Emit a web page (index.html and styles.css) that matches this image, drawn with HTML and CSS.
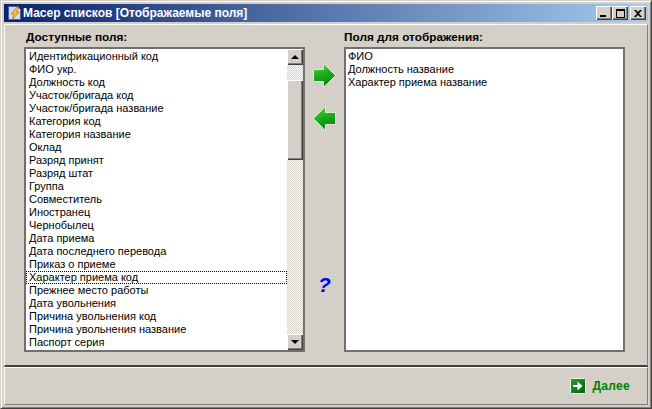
FILE: index.html
```html
<!DOCTYPE html>
<html>

<head>
    <meta charset="UTF-8">
    <title>Масер списков</title>
    <link rel="stylesheet" href="styles.css">
</head>

<body>
    <div class="window">
        <div class="titlebar">
            <svg class="appIcon" width="14" height="16" viewBox="0 0 14 16">
                <path d="M0.500 1.500h9l3 3v10h-12z" fill="#cfdcf5" stroke="#4a5f9a"/>
                <path d="M9 2L3 9h3l-2 6 7-8H8l3-5z" fill="#f7c81e" stroke="#d0601a" stroke-width="0.7"/>
            </svg>
            <div class="titleText">Масер списков [Отображаемые поля]</div>
            <div class="capButtons">
                <div class="capButton"><span class="minGlyph"></span></div>
                <div class="capButton"><span class="maxGlyph"></span></div>
                <div class="capButton closeButton">
                    <svg width="8" height="7" viewBox="0 0 8 7"><path d="M0 0h2l2 2 2-2h2L5 3.500 8 7H6L4 5 2 7H0l3-3.500z" fill="#000"/></svg>
                </div>
            </div>
        </div>

        <div class="mainPanel">
            <div class="column">
                <div class="caption">Доступные поля:</div>
                <div class="listbox">
                    <div class="items">
                        <div class="item">Идентификационный код</div>
                        <div class="item">ФИО укр.</div>
                        <div class="item">Должность код</div>
                        <div class="item">Участок/бригада код</div>
                        <div class="item">Участок/бригада название</div>
                        <div class="item">Категория код</div>
                        <div class="item">Категория название</div>
                        <div class="item">Оклад</div>
                        <div class="item">Разряд принят</div>
                        <div class="item">Разряд штат</div>
                        <div class="item">Группа</div>
                        <div class="item">Совместитель</div>
                        <div class="item">Иностранец</div>
                        <div class="item">Чернобылец</div>
                        <div class="item">Дата приема</div>
                        <div class="item">Дата последнего перевода</div>
                        <div class="item">Приказ о приеме</div>
                        <div class="item focused">Характер приема код</div>
                        <div class="item">Прежнее место работы</div>
                        <div class="item">Дата увольнения</div>
                        <div class="item">Причина увольнения код</div>
                        <div class="item">Причина увольнения название</div>
                        <div class="item">Паспорт серия</div>
                    </div>
                    <div class="scrollbar">
                        <div class="scrollBtn"><span class="arrowUp"></span></div>
                        <div class="track short"></div>
                        <div class="thumb"></div>
                        <div class="track"></div>
                        <div class="scrollBtn"><span class="arrowDown"></span></div>
                    </div>
                </div>
            </div>

            <div class="middle">
                <svg class="moveIcon" width="25" height="25" viewBox="0 0 25 25">
                    <defs>
                        <linearGradient id="arrowFill" x1="0" y1="0" x2="0.300" y2="1">
                            <stop offset="0" stop-color="#66dd3c"/>
                            <stop offset="0.500" stop-color="#1cb01e"/>
                            <stop offset="1" stop-color="#0b8413"/>
                        </linearGradient>
                    </defs>
                    <path d="M1.500 6.500h10v-6l12 12-12 12v-6h-10z" fill="url(#arrowFill)" stroke="#dfe9cf"/>
                </svg>
                <svg class="moveIcon" width="25" height="25" viewBox="0 0 25 25">
                    <path d="M23.500 6.500h-10v-6l-12 12 12 12v-6h10z" fill="url(#arrowFill)" stroke="#dfe9cf"/>
                </svg>
                <div class="help">?</div>
            </div>

            <div class="column">
                <div class="caption captionRight">Поля для отображения:</div>
                <div class="listbox listRight">
                    <div class="items">
                        <div class="item">ФИО</div>
                        <div class="item">Должность название</div>
                        <div class="item">Характер приема название</div>
                    </div>
                </div>
            </div>
        </div>

        <div class="footer">
            <svg width="16" height="16" viewBox="0 0 16 16">
                <defs>
                    <linearGradient id="nextFill" x1="0" y1="0" x2="1" y2="1">
                        <stop offset="0" stop-color="#2a9a36"/>
                        <stop offset="1" stop-color="#06600f"/>
                    </linearGradient>
                </defs>
                <rect x="0.500" y="0.500" width="15" height="15" rx="1" fill="url(#nextFill)" stroke="#eef3ea"/>
                <path d="M3 7h4.500V3.500L12.500 8l-5 4.500V9H3z" fill="#fff"/>
            </svg>
            <div class="nextText">Далее</div>
        </div>
    </div>
</body>

</html>
```

FILE: styles.css
```css
html, body {
    margin: 0;
    padding: 0;
}

body {
    width: 652px;
    height: 409px;
    overflow: hidden;
    font-family: "Liberation Sans", Arial, sans-serif;
    font-size: 11px;
    color: #000;
    background-color: #d4d0c8;
}

.window {
    width: 652px;
    height: 409px;
    box-sizing: border-box;
    padding: 3px;
    border: 1px solid;
    border-color: #d4d0c8 #404040 #404040 #d4d0c8;
    box-shadow: inset 1px 1px 0 #fff, inset -1px -1px 0 #808080;
    display: flex;
    flex-direction: column;
}

.titlebar {
    height: 18px;
    flex: none;
    display: flex;
    align-items: center;
    background: linear-gradient(to right, #0a246a, #a6caf0);
    padding-left: 4px;
    margin-bottom: 2px;
}

.appIcon {
    flex: none;
    margin-right: 1px;
}

.titleText {
    flex: 1;
    color: #fff;
    font-weight: bold;
    font-size: 12px;
    white-space: nowrap;
}

.capButtons {
    display: flex;
    margin-right: 2px;
}

.capButton {
    width: 16px;
    height: 14px;
    box-sizing: border-box;
    background-color: #d4d0c8;
    box-shadow: inset 1px 1px 0 #fff, inset -1px -1px 0 #404040, inset -2px -2px 0 #808080;
    display: flex;
    align-items: center;
    justify-content: center;
}

.closeButton {
    margin-left: 2px;
}

.minGlyph {
    width: 6px;
    height: 2px;
    background-color: #000;
    margin-top: 6px;
    margin-right: 2px;
}

.maxGlyph {
    width: 9px;
    height: 9px;
    box-sizing: border-box;
    border: 1px solid #000;
    border-top-width: 2px;
}

.mainPanel {
    height: 343px;
    flex: none;
    box-sizing: border-box;
    padding: 5px 0 0 19px;
    display: flex;
    border-style: solid;
    border-color: #fff #808080 #404040 #fff;
    border-width: 1px 1px 2px 1px;
}

.column {
    width: 281px;
    flex: none;
}

.caption {
    font-weight: bold;
    font-size: 11.800px;
    height: 17px;
    line-height: 14px;
    padding-left: 2px;
    white-space: nowrap;
}

.captionRight {
    padding-left: 0;
}

.listbox {
    width: 281px;
    height: 305px;
    box-sizing: border-box;
    display: flex;
    background-color: #fff;
    border: 2px solid #707070;
}

.items {
    flex: 1;
    padding-top: 1px;
}

.item {
    height: 13px;
    line-height: 13px;
    padding-left: 3px;
    white-space: nowrap;
}

.listRight .item {
    padding-left: 2px;
}

.focused {
    box-sizing: border-box;
    border: 1px dotted #000;
    line-height: 11px;
    padding-left: 2px;
}

.scrollbar {
    width: 16px;
    flex: none;
    display: flex;
    flex-direction: column;
}

.scrollBtn {
    width: 16px;
    height: 16px;
    flex: none;
    background-color: #d4d0c8;
    box-shadow: inset 1px 1px 0 #fff, inset -1px -1px 0 #404040, inset -2px -2px 0 #808080;
    display: flex;
    align-items: center;
    justify-content: center;
}

.arrowUp {
    width: 0;
    height: 0;
    border-left: 4px solid transparent;
    border-right: 4px solid transparent;
    border-bottom: 4px solid #000;
}

.arrowDown {
    width: 0;
    height: 0;
    border-left: 4px solid transparent;
    border-right: 4px solid transparent;
    border-top: 4px solid #000;
}

.track {
    flex: 1;
    background: repeating-conic-gradient(#d4d0c8 0 25%, #fff 0 50%) 0 0 / 2px 2px;
}

.track.short {
    flex: none;
    height: 15px;
}

.thumb {
    height: 80px;
    flex: none;
    background-color: #d4d0c8;
    box-shadow: inset 1px 1px 0 #fff, inset -1px -1px 0 #404040, inset -2px -2px 0 #808080;
}

.middle {
    width: 39px;
    flex: none;
    display: flex;
    flex-direction: column;
    align-items: center;
    padding-top: 33px;
}

.moveIcon {
    flex: none;
    margin-bottom: 18px;
}

.help {
    margin-top: 124px;
    color: #0000f0;
    font-size: 21px;
    font-weight: bold;
    font-style: italic;
    line-height: 24px;
}

.footer {
    flex: 1;
    display: flex;
    align-items: center;
    justify-content: flex-end;
    padding-right: 17px;
    gap: 6px;
    border-style: solid;
    border-color: #fff #808080 #808080 #fff;
    border-width: 1px;
}

.nextText {
    color: #007f00;
    font-weight: bold;
    font-size: 12px;
    letter-spacing: 0.3px;
}
```
